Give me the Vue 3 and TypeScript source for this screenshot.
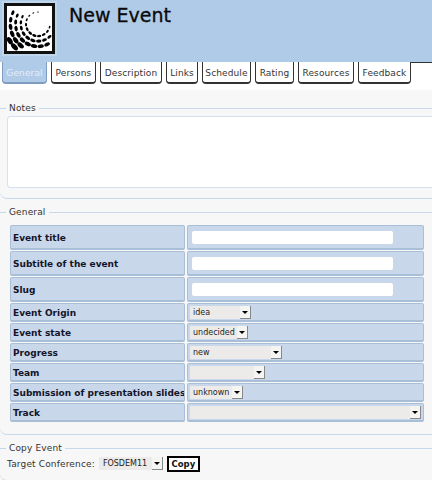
<template>
  <div class="page">
    <header class="top">
      <div class="logo">
        <svg width="45" height="45" viewBox="0 0 45 45">
          <ellipse v-for="(d, i) in dots" :key="i" :cx="d.x" :cy="d.y" :rx="d.rx" :ry="d.ry" :transform="`rotate(${d.rot} ${d.x} ${d.y})`" fill="#000" />
        </svg>
      </div>
      <h1>New Event</h1>
    </header>

    <nav class="tabs">
      <a v-for="(t, i) in tabs" :key="t.label" class="tab" :class="{ active: i === 0 }" :style="{ width: t.width + 'px' }">{{ t.label }}</a>
      <div class="tabRest"></div>
    </nav>

    <main class="content">
      <section class="group notes">
        <div class="legend"><span>Notes</span></div>
        <div class="textarea"></div>
      </section>

      <section class="group general">
        <div class="legend"><span>General</span></div>
        <div class="rows">
          <div v-for="r in rows" :key="r.label" class="row">
            <div class="cell label" :class="{ tall: r.input }">{{ r.label }}</div>
            <div class="cell value">
              <input v-if="r.input" type="text" />
              <div v-else class="select" :style="{ width: r.width + 'px' }">
                <span>{{ r.value }}</span>
                <i class="arrow"></i>
              </div>
            </div>
          </div>
        </div>
      </section>

      <section class="group copy">
        <div class="legend"><span>Copy Event</span></div>
        <div class="copyRow">
          <span class="target">Target Conference:</span>
          <div class="select conf"><span>FOSDEM11</span><i class="arrow"></i></div>
          <button>Copy</button>
        </div>
      </section>
    </main>
  </div>
</template>

<script setup lang="ts">
const tabs = [
  { label: 'General', width: 45 },
  { label: 'Persons', width: 45 },
  { label: 'Description', width: 62 },
  { label: 'Links', width: 32 },
  { label: 'Schedule', width: 49 },
  { label: 'Rating', width: 39 },
  { label: 'Resources', width: 56 },
  { label: 'Feedback', width: 53 }
]

const rows = [
  { label: 'Event title', input: true },
  { label: 'Subtitle of the event', input: true },
  { label: 'Slug', input: true },
  { label: 'Event Origin', value: 'idea', width: 61 },
  { label: 'Event state', value: 'undecided', width: 58 },
  { label: 'Progress', value: 'new', width: 92 },
  { label: 'Team', value: '', width: 75 },
  { label: 'Submission of presentation slides', value: 'unknown', width: 53 },
  { label: 'Track', value: '', width: 231 }
]

// logo: rings of dots round one centre, bigger towards the bottom left
const dots: { x: number; y: number; rx: number; ry: number; rot: number }[] = []
for (let ring = 0; ring < 5; ring++) {
  const radius = 12 + ring * 5.2
  const count = 12 + ring * 2
  for (let n = 0; n < count; n++) {
    const deg = 90 + (n * 255) / (count - 1) + (ring % 2) * 6
    const a = (deg * Math.PI) / 180
    const x = 31 + Math.cos(a) * radius
    const y = 18 - Math.sin(a) * radius
    if (x < 1 || x > 44 || y < 6 || y > 43) continue
    const weight = 0.5 + 0.5 * Math.cos(((deg - 250) * Math.PI) / 180)
    const size = (0.7 + ring * 0.16) * (0.7 + weight * 1.2)
    dots.push({ x, y, rx: size * 1.7, ry: size, rot: Math.round(90 - deg) })
  }
}
</script>

<style>
html,
body {
  margin: 0;
  background: #fff;
}
</style>

<style scoped>
.page {
  width: 432px;
  height: 480px;
  overflow: hidden;
  font-family: 'DejaVu Sans', sans-serif;
  font-size: 9px;
  color: #333;
  background: #fff;
}

.top {
  display: flex;
  height: 62px;
  background: #b0cbe8;
  box-sizing: border-box;
  padding-left: 4px;
  align-items: flex-start;
}
.logo {
  width: 51px;
  height: 51px;
  margin-top: 3px;
  box-sizing: border-box;
  border: 3px solid #111;
  background: #fff;
  box-shadow: 0 0 0 2px #c0d6ec;
}
.logo svg {
  display: block;
}
h1 {
  margin: 2px 0 0 14px;
  font-size: 19px;
  line-height: 26px;
  font-weight: 500;
  color: #0a0a0a;
  -webkit-text-stroke: 0.3px #0a0a0a;
}

.tabs {
  display: flex;
  height: 28px;
  box-sizing: border-box;
  padding-left: 2px;
  gap: 4px;
  background: #fff;
}
.tab {
  height: 22px;
  box-sizing: border-box;
  line-height: 22px;
  text-align: center;
  color: #333;
  background: #fff;
  border: 1px solid #333;
  border-top: none;
  border-bottom-width: 2px;
  border-radius: 0 0 4px 4px;
  letter-spacing: 0.12px;
  white-space: nowrap;
}
.tab.active {
  color: #e4edf7;
  background: #b0cbe8;
  border-color: #7f9dc0;
}
.tabRest {
  flex: 1;
  height: 1px;
  margin-left: -4px;
  background: #333;
}

.content {
  background: #f7f7f7;
  padding-top: 12px;
}
.group {
  border-bottom: 1px solid #c6d9ec;
  border-radius: 0 0 0 7px;
}
.legend {
  display: flex;
  align-items: center;
  gap: 3px;
  height: 12px;
  line-height: 12px;
  color: #333;
  letter-spacing: 0.15px;
}
.legend::before {
  content: '';
  width: 6px;
  border-top: 1px solid #c6d9ec;
}
.legend::after {
  content: '';
  flex: 1;
  border-top: 1px solid #c6d9ec;
}
.notes {
  height: 97px;
  box-sizing: border-box;
}
.textarea {
  height: 70px;
  margin: 2px 0 0 7px;
  background: #fff;
  border: 1px solid #d4e1ee;
  border-right: none;
  border-radius: 4px 0 0 4px;
}

.general {
  padding-top: 7px;
  height: 236px;
  box-sizing: border-box;
}
.rows {
  display: flex;
  flex-direction: column;
  gap: 1px;
  margin: 7px 8px 0 10px;
}
.row {
  display: grid;
  grid-template-columns: 175px 237px;
  gap: 2px;
}
.cell {
  box-sizing: border-box;
  background: #c8d7e9;
  border: 1px solid #a9bfd8;
  border-bottom-width: 2px;
  border-radius: 2px;
  display: flex;
  align-items: center;
  min-height: 19px;
}
.label {
  padding-left: 2px;
  padding-top: 1px;
  font-weight: 700;
  color: #14142a;
  white-space: nowrap;
  overflow: hidden;
}
.label.tall {
  height: 25px;
}
.value {
  padding-left: 2px;
}
input {
  width: 201px;
  height: 13px;
  margin-left: 2px;
  padding: 0;
  border: none;
  border-radius: 2px;
  background: #fff;
  outline: none;
}
.select {
  position: relative;
  display: flex;
  align-items: center;
  height: 13px;
  box-sizing: border-box;
  padding-left: 3px;
  background: #ecebe9;
  color: #222;
  font-size: 8px;
}
.arrow {
  position: absolute;
  top: 0;
  right: 0;
  width: 11px;
  height: 13px;
  box-sizing: border-box;
  background: #f4f4f2;
  border-right: 1px solid #888;
  border-bottom: 1px solid #888;
}
.arrow::after {
  content: '';
  position: absolute;
  left: 2px;
  top: 5px;
  border-left: 3px solid transparent;
  border-right: 3px solid transparent;
  border-top: 3px solid #000;
}

.copy {
  margin-top: 7px;
  height: 38px;
  border-bottom: 1px solid #d0dbe6;
}
.copyRow {
  display: flex;
  align-items: center;
  padding-left: 7px;
  margin-top: 1px;
  height: 17px;
}
.target {
  letter-spacing: 0.15px;
}
.conf {
  width: 64px;
  margin-left: 4px;
  padding-left: 4px;
}
button {
  margin-left: 4px;
  width: 33px;
  height: 16px;
  padding: 0;
  border: 2px solid #000;
  background: #fff;
  font-family: inherit;
  font-size: 8.5px;
  font-weight: 700;
  color: #111;
}
</style>
